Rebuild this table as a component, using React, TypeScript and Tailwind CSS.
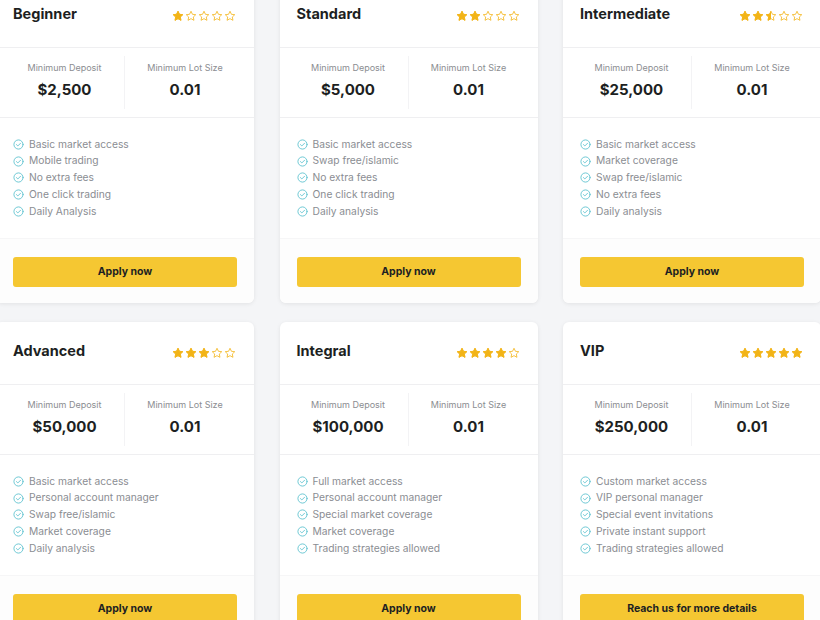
import React from 'react';

interface Plan {
  name: string;
  rating: number;
  deposit: string;
  lot: string;
  features: string[];
  cta: string;
}

const plans: Plan[] = [
  {
    name: 'Beginner',
    rating: 1,
    deposit: '$2,500',
    lot: '0.01',
    features: ['Basic market access', 'Mobile trading', 'No extra fees', 'One click trading', 'Daily Analysis'],
    cta: 'Apply now',
  },
  {
    name: 'Standard',
    rating: 2,
    deposit: '$5,000',
    lot: '0.01',
    features: ['Basic market access', 'Swap free/islamic', 'No extra fees', 'One click trading', 'Daily analysis'],
    cta: 'Apply now',
  },
  {
    name: 'Intermediate',
    rating: 2.5,
    deposit: '$25,000',
    lot: '0.01',
    features: ['Basic market access', 'Market coverage', 'Swap free/islamic', 'No extra fees', 'Daily analysis'],
    cta: 'Apply now',
  },
  {
    name: 'Advanced',
    rating: 3,
    deposit: '$50,000',
    lot: '0.01',
    features: ['Basic market access', 'Personal account manager', 'Swap free/islamic', 'Market coverage', 'Daily analysis'],
    cta: 'Apply now',
  },
  {
    name: 'Integral',
    rating: 4,
    deposit: '$100,000',
    lot: '0.01',
    features: ['Full market access', 'Personal account manager', 'Special market coverage', 'Market coverage', 'Trading strategies allowed'],
    cta: 'Apply now',
  },
  {
    name: 'VIP',
    rating: 5,
    deposit: '$250,000',
    lot: '0.01',
    features: ['Custom market access', 'VIP personal manager', 'Special event invitations', 'Private instant support', 'Trading strategies allowed'],
    cta: 'Reach us for more details',
  },
];

const STAR = 'M12 2.5l2.9 6.1 6.6.8-4.9 4.6 1.3 6.6L12 17.3l-5.9 3.3 1.3-6.6-4.9-4.6 6.6-.8z';

function Star({ fill }: { fill: 'full' | 'half' | 'empty' }) {
  const id = React.useId();
  return (
    <svg viewBox="0 0 24 24" className="w-[12px] h-[12px]">
      <defs>
        <clipPath id={id}>
          <rect x="0" y="0" width="12" height="24" />
        </clipPath>
      </defs>
      <path d={STAR} fill="none" stroke="#f2b417" strokeWidth="1.6" strokeLinejoin="round" />
      {fill === 'full' && <path d={STAR} fill="#f2b417" stroke="#f2b417" strokeWidth="1.6" strokeLinejoin="round" />}
      {fill === 'half' && (
        <path d={STAR} fill="#f2b417" stroke="#f2b417" strokeWidth="1.6" strokeLinejoin="round" clipPath={`url(#${id})`} />
      )}
    </svg>
  );
}

function Rating({ value }: { value: number }) {
  return (
    <div className="flex items-center gap-[1px]">
      {[1, 2, 3, 4, 5].map((i) => (
        <Star key={i} fill={value >= i ? 'full' : value >= i - 0.5 ? 'half' : 'empty'} />
      ))}
    </div>
  );
}

function CheckCircle() {
  return (
    <svg viewBox="0 0 24 24" className="w-[11px] h-[11px] shrink-0" fill="none" stroke="#62c4d1" strokeWidth="2" strokeLinecap="round" strokeLinejoin="round">
      <circle cx="12" cy="12" r="10" />
      <path d="M7.5 12.2l3 3 6-6" />
    </svg>
  );
}

function PlanCard({ plan }: { plan: Plan }) {
  return (
    <article className="bg-white rounded-[6px] shadow-[0_1px_4px_rgba(0,0,0,0.08)] flex flex-col">
      {/* Header */}
      <div className="h-[63px] px-[17px] pt-[19px] flex items-start justify-between border-b border-[#efeff1]">
        <h2 className="text-[14.5px] leading-[20px] font-bold text-[#1d1f22]">{plan.name}</h2>
        <div className="pt-[6px] pr-[1px]">
          <Rating value={plan.rating} />
        </div>
      </div>

      {/* Stats */}
      <div className="h-[70px] px-[9px] grid grid-cols-2 border-b border-[#efeff1]">
        <div className="flex flex-col items-center pt-[6px] my-[8px] border-r border-[#f3f3f5]">
          <span className="text-[9px] leading-[12px] text-[#8b8d91]">Minimum Deposit</span>
          <span className="mt-[6px] text-[15px] leading-[20px] font-bold text-[#1d1f22]">{plan.deposit}</span>
        </div>
        <div className="flex flex-col items-center pt-[14px]">
          <span className="text-[9px] leading-[12px] text-[#8b8d91]">Minimum Lot Size</span>
          <span className="mt-[6px] text-[15px] leading-[20px] font-bold text-[#1d1f22]">{plan.lot}</span>
        </div>
      </div>

      {/* Features */}
      <ul className="h-[120px] px-[17px] pt-[18px] flex flex-col">
        {plan.features.map((f) => (
          <li key={f} className="flex items-center gap-[5px] h-[16.75px] text-[10.25px] text-[#8a8d92]">
            <CheckCircle />
            <span>{f}</span>
          </li>
        ))}
      </ul>

      {/* Footer */}
      <div className="h-[65px] px-[17px] pt-[18px] border-t border-[#f6f6f7] bg-[#fdfdfd] rounded-b-[6px]">
        <button className="w-full h-[30px] rounded-[3px] bg-[#f5c732] text-[10.5px] font-bold text-[#1d1f22]">
          {plan.cta}
        </button>
      </div>
    </article>
  );
}

export default function App() {
  return (
    <div className="w-[820px] h-[620px] overflow-hidden bg-[#f4f5f7] font-['Inter',sans-serif]">
      <div className="grid grid-cols-[258px_258px_258px] gap-x-[25.5px] gap-y-[19px] ml-[-4px] mt-[-15px]">
        {plans.map((p) => (
          <PlanCard key={p.name} plan={p} />
        ))}
      </div>
    </div>
  );
}
